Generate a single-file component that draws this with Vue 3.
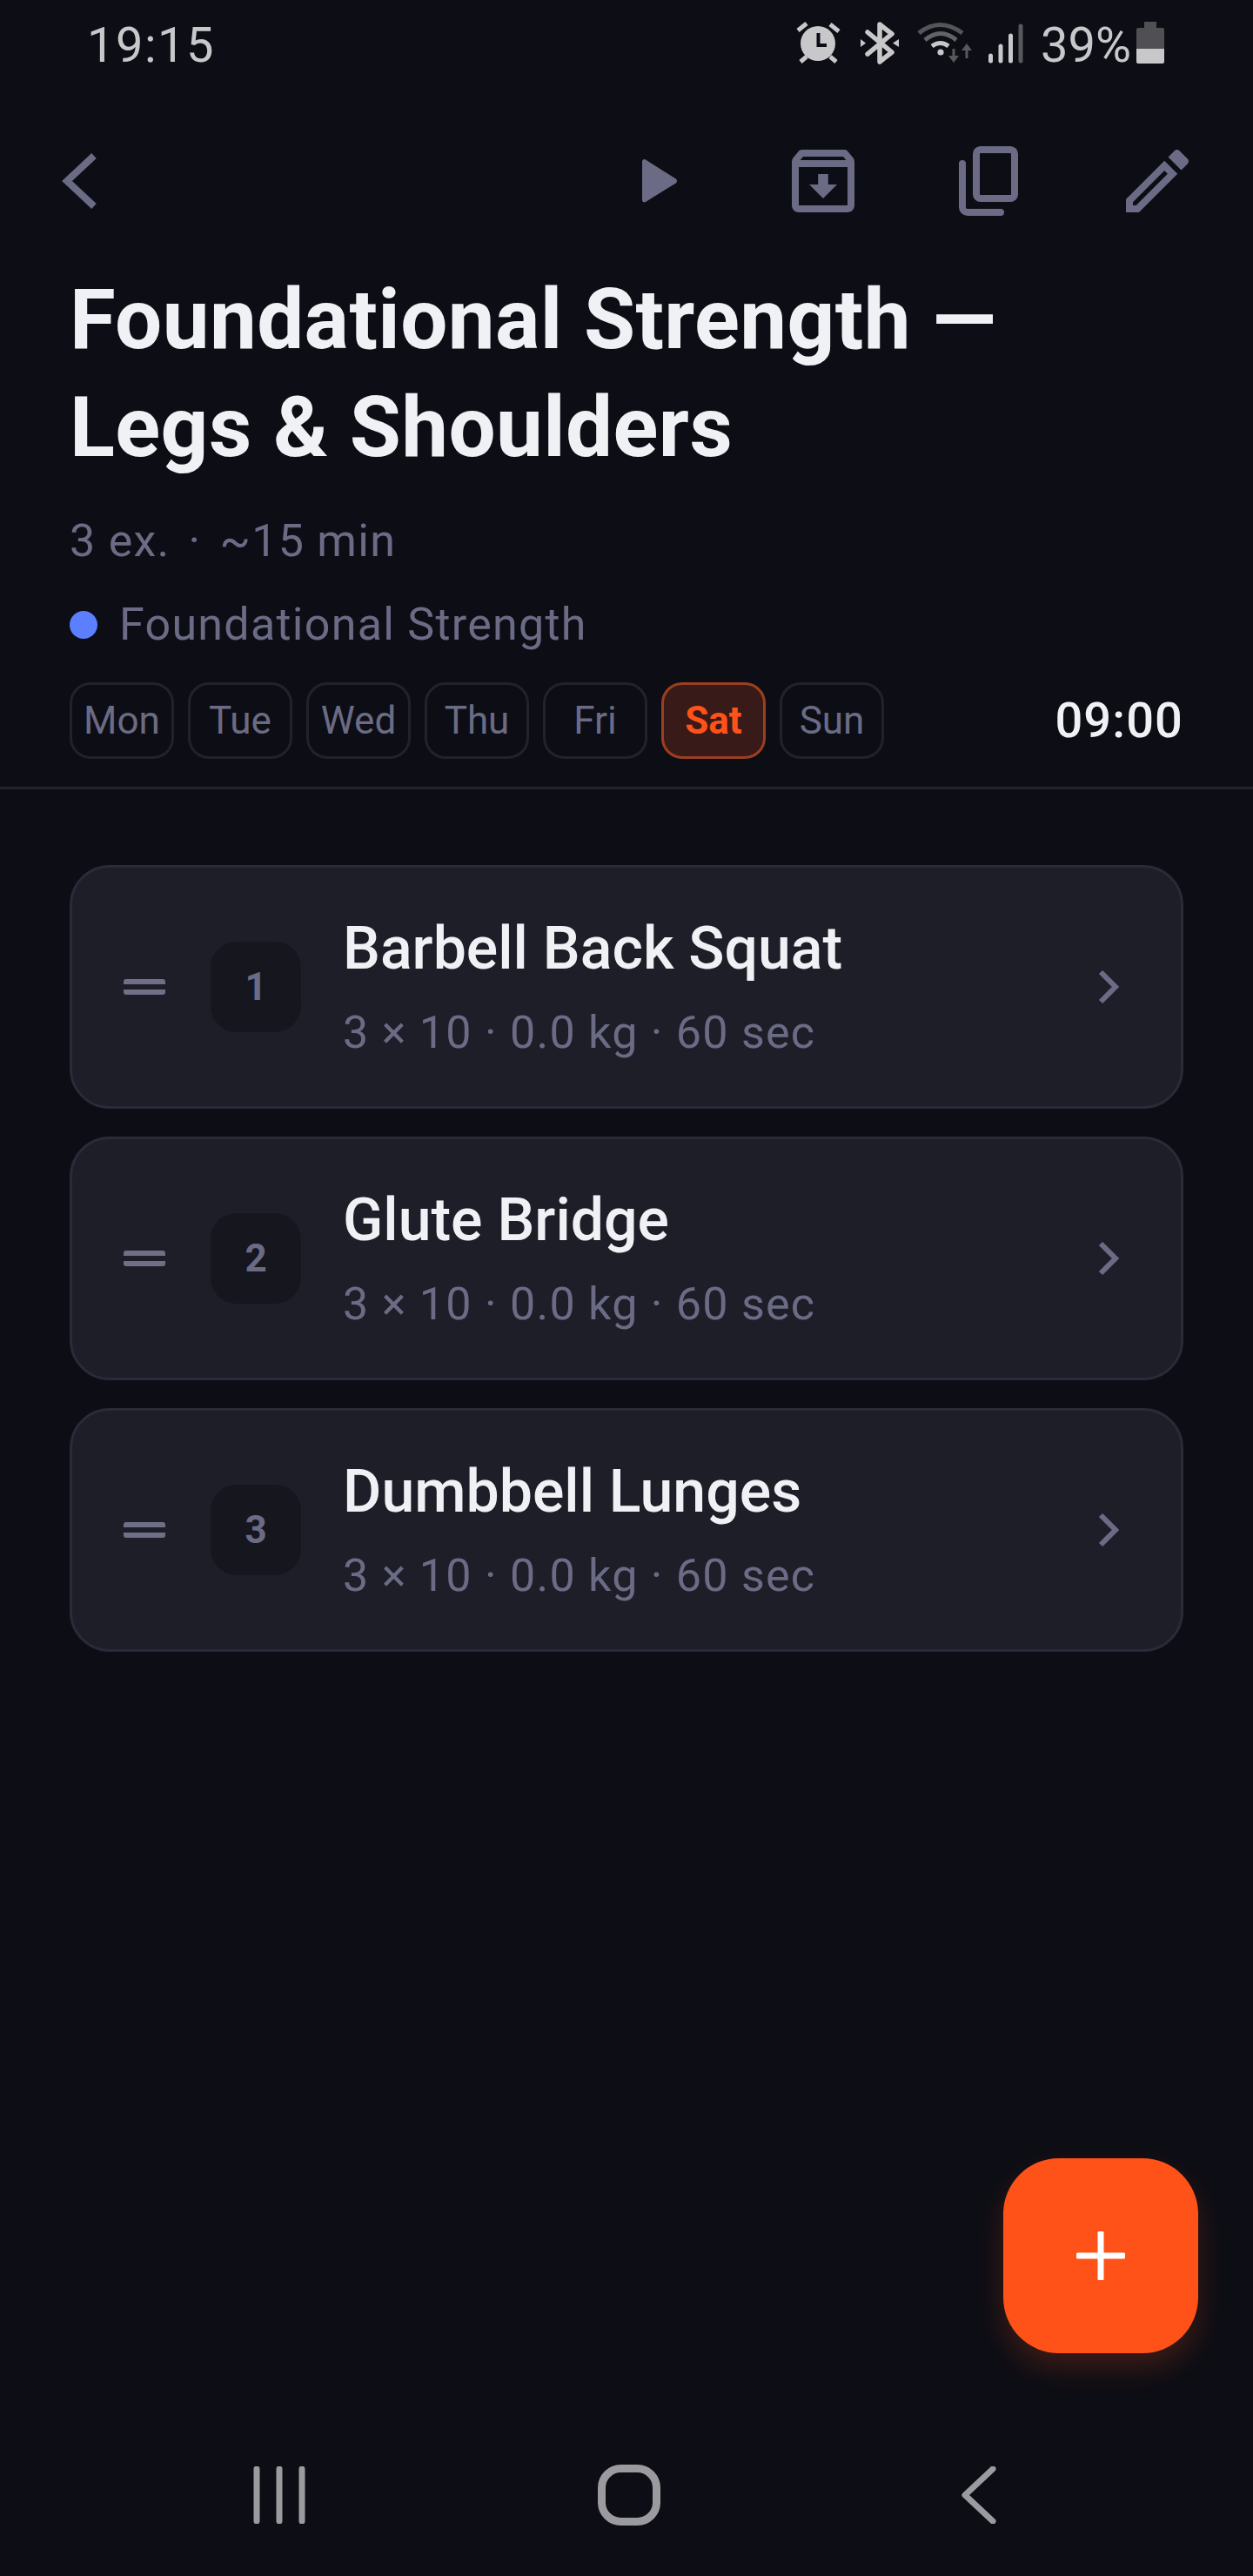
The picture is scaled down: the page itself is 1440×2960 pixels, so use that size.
<template>
  <div class="screen">
    <div class="status">
      <span class="clock">19:15</span>
      <div class="status-icons">
        <svg width="52" height="50" viewBox="912 24 52 50">
          <circle cx="938" cy="50" r="20" fill="#c8c8cb" />
          <path d="M938.5 38V52H948" fill="none" stroke="#0d0e15" stroke-width="4" />
          <path d="M915 35L925 27M952 28L962 36M918 71L925 65M952 65L959 71" fill="none" stroke="#c8c8cb" stroke-width="5" />
        </svg>
        <svg width="52" height="50" viewBox="982 24 52 50">
          <path d="M995 37L1023 60L1009 71V28L1023 39L995 62" fill="none" stroke="#c8c8cb" stroke-width="5.5" stroke-linejoin="round" stroke-linecap="round" />
          <path d="M987 45L993 49.5L987 54ZM1031 45L1024 49.5L1031 54Z" fill="#c8c8cb" />
        </svg>
        <svg width="64" height="50" viewBox="1052 24 64 50">
          <path d="M1054 38Q1078 19 1104 38" fill="none" stroke="#555559" stroke-width="5" />
          <path d="M1061 46Q1079 31 1097 46" fill="none" stroke="#636367" stroke-width="5" />
          <path d="M1069 53Q1079 46 1088 53" fill="none" stroke="#c8c8cb" stroke-width="5" />
          <circle cx="1079" cy="60" r="3.6" fill="#c8c8cb" />
          <path d="M1092.5 56H1095.5V64H1100L1094 72L1088 64H1092.5ZM1107.5 67H1110.5V58H1115L1109 50L1103 58H1107.5Z" fill="#58585c" />
        </svg>
        <svg width="42" height="50" viewBox="1134 24 42 50">
          <path d="M1136.5 64V70M1148 53V70M1159.5 41V70" stroke="#c8c8cb" stroke-width="5" stroke-linecap="round" />
          <path d="M1171 30V70" stroke="#58585c" stroke-width="5" stroke-linecap="round" />
        </svg>
        <div class="batt">
          <span class="pct">39%</span>
          <svg width="32" height="50" viewBox="1306 24 32 50">
            <path d="M1315 25H1329V32H1336Q1338 32 1338 34V56H1306V34Q1306 32 1308 32H1315Z" fill="#4f4f54" />
            <path d="M1306 56H1338V71Q1338 73 1336 73H1308Q1306 73 1306 71Z" fill="#c8c8cb" />
          </svg>
        </div>
      </div>
    </div>

    <div class="toolbar">
      <button class="back">
        <svg width="48" height="72" viewBox="68 172 48 72">
          <path d="M108 179L77 208L108 237" fill="none" stroke="#6b6b85" stroke-width="8" />
        </svg>
      </button>
      <div class="actions">
        <button class="act">
          <svg width="96" height="96" viewBox="0 0 24 24" fill="#6b6b85">
            <path d="M8 6.4C8 5.9 8.6 5.6 9 5.9L17.7 11.4C18.1 11.7 18.1 12.3 17.7 12.6L9 18C8.6 18.3 8 18 8 17.500Z" />
          </svg>
        </button>
        <button class="act">
          <svg width="96" height="96" viewBox="0 0 24 24" fill="#6b6b85">
            <path d="M20.54 5.23l-1.39-1.68C18.88 3.21 18.47 3 18 3H6c-.47 0-.88.21-1.16.55L3.46 5.23C3.17 5.57 3 6.02 3 6.5V19c0 1.1.9 2 2 2h14c1.1 0 2-.9 2-2V6.5c0-.48-.17-.93-.46-1.27zM6.24 5h11.52l.83 1H5.42l.82-1zM5 19V8h14v11H5zm8.45-9h-2.9v3H8l4 4 4-4h-2.55z" />
          </svg>
        </button>
        <button class="act">
          <svg width="96" height="96" viewBox="0 0 24 24" fill="none" stroke="#6b6b85" stroke-width="2">
            <rect x="8" y="3" width="11" height="14" rx="1.2" />
            <path d="M4 7V19.500A1.500 1.500 0 0 0 5.500 21H15" stroke-linecap="round" />
          </svg>
        </button>
        <button class="act">
          <svg width="96" height="96" viewBox="0 0 24 24" fill="#6b6b85">
            <path d="M14.06 9.02l.92.92L5.92 19H5v-.92l9.06-9.06M17.66 3c-.25 0-.51.1-.7.29l-1.83 1.83 3.75 3.75 1.83-1.83c.39-.39.39-1.02 0-1.41l-2.34-2.34c-.2-.2-.45-.29-.71-.29zm-3.6 3.19L3 17.25V21h3.75L17.81 9.94l-3.75-3.75z" />
          </svg>
        </button>
      </div>
    </div>

    <div class="head">
      <h1>Foundational Strength —<br />Legs &amp; Shoulders</h1>
      <div class="meta">
        <span>3 ex.</span>
        <span>·</span>
        <span>~15 min</span>
      </div>
      <div class="group">
        <span class="dot"></span>
        <span>Foundational Strength</span>
      </div>
      <div class="sched">
        <div class="days">
          <span v-for="d in days" :key="d" class="day" :class="{ on: d === 'Sat' }">{{ d }}</span>
        </div>
        <span class="time">09:00</span>
      </div>
    </div>

    <div class="list">
      <div v-for="(ex, i) in exercises" :key="ex" class="card">
        <span class="handle"></span>
        <span class="num">{{ i + 1 }}</span>
        <div class="info">
          <div class="name">{{ ex }}</div>
          <div class="sub">3 × 10 · 0.0 kg · 60 sec</div>
        </div>
        <svg class="go" width="24" height="40" viewBox="0 0 24 40">
          <path d="M3 3L20 20L3 37" fill="none" stroke="#6b6b85" stroke-width="6" />
        </svg>
      </div>
    </div>

    <button class="fab">
      <svg width="56" height="56" viewBox="0 0 56 56">
        <path d="M28 2V54M2 28H54" stroke="#fff" stroke-width="7" stroke-linecap="round" />
      </svg>
    </button>

    <div class="nav">
      <div class="nav-item">
        <svg width="60" height="66" viewBox="0 0 60 66">
          <path d="M4 3V63M30 3V63M56 3V63" stroke="#9b9b9f" stroke-width="7" stroke-linecap="round" />
        </svg>
      </div>
      <div class="nav-item">
        <svg width="72" height="70" viewBox="0 0 72 70">
          <rect x="4.500" y="4.500" width="63" height="61" rx="22" fill="none" stroke="#9b9b9f" stroke-width="9" />
        </svg>
      </div>
      <div class="nav-item">
        <svg width="40" height="66" viewBox="0 0 40 66">
          <path d="M36 3L4 33L36 63" fill="none" stroke="#9b9b9f" stroke-width="7" stroke-linecap="round" stroke-linejoin="round" />
        </svg>
      </div>
    </div>
  </div>
</template>

<script setup>
const days = ['Mon', 'Tue', 'Wed', 'Thu', 'Fri', 'Sat', 'Sun'];
const exercises = ['Barbell Back Squat', 'Glute Bridge', 'Dumbbell Lunges'];
</script>

<style>
body {
  background: #0d0e15;
}
</style>

<style scoped>
.screen {
  position: relative;
  width: 1440px;
  height: 2960px;
  display: flex;
  flex-direction: column;
  background: #0d0e15;
  font-family: Roboto, "Liberation Sans", sans-serif;
  color: #6b6b85;
  overflow: hidden;
}

button {
  background: none;
  border: none;
  padding: 0;
  display: flex;
  align-items: center;
  justify-content: center;
}

.status {
  height: 112px;
  box-sizing: border-box;
  padding: 24px 102px 0 100px;
  display: flex;
  justify-content: space-between;
  align-items: flex-start;
  color: #c8c8cb;
  font-size: 56px;
  font-weight: 400;
  line-height: 50px;
}

.clock,
.pct {
  padding-top: 3px;
}

.clock {
  letter-spacing: 1.5px;
}

.status-icons {
  display: flex;
  gap: 18px;
}

.batt {
  display: flex;
  gap: 6px;
}

.toolbar {
  height: 193px;
  padding-right: 14px;
  display: flex;
  justify-content: space-between;
  align-items: flex-start;
}

.back {
  height: 192px;
  margin-left: 68px;
}

.actions {
  display: flex;
}

.act {
  width: 192px;
  height: 192px;
}

.head {
  padding: 0 80px 32px;
  border-bottom: 3px solid #21222c;
}

h1 {
  margin: 0;
  font-size: 96px;
  line-height: 124px;
  font-weight: 700;
  letter-spacing: 0.42px;
  color: #f0f1f5;
}

.meta {
  margin-top: 35px;
  display: flex;
  gap: 21px;
  font-size: 52px;
  line-height: 68px;
  letter-spacing: 1.28px;
}

.group {
  margin-top: 28px;
  display: flex;
  align-items: center;
  gap: 25px;
  font-size: 52px;
  line-height: 68px;
  letter-spacing: 1.28px;
}

.dot {
  width: 32px;
  height: 32px;
  border-radius: 50%;
  background: #5b7fff;
}

.sched {
  margin-top: 32px;
  display: flex;
  justify-content: space-between;
  align-items: center;
}

.days {
  display: flex;
  gap: 16px;
}

.day {
  width: 120px;
  height: 88px;
  box-sizing: border-box;
  display: flex;
  align-items: center;
  justify-content: center;
  border: 3px solid #21222c;
  border-radius: 24px;
  font-size: 44px;
}

.day.on {
  background: #381a18;
  border-color: #9c3f20;
  color: #ff5219;
  font-weight: 700;
}

.time {
  font-size: 56px;
  font-weight: 500;
  letter-spacing: 1.1px;
  color: #f0f1f5;
}

.list {
  padding: 87px 80px 0;
  display: flex;
  flex-direction: column;
  gap: 32px;
}

.card {
  height: 280px;
  box-sizing: border-box;
  padding: 0 71px 0 59px;
  display: flex;
  align-items: center;
  background: #1e1e29;
  border: 3px solid #2a2a38;
  border-radius: 46px;
}

.handle {
  width: 48px;
  height: 18px;
  box-sizing: border-box;
  border-top: 6px solid #6f6f88;
  border-bottom: 6px solid #6f6f88;
  border-radius: 3px;
}

.num {
  margin-left: 52px;
  width: 104px;
  height: 104px;
  border-radius: 30px;
  background: #16161e;
  display: flex;
  align-items: center;
  justify-content: center;
  font-size: 44px;
  font-weight: 700;
}

.info {
  margin-left: 48px;
  flex: 1;
}

.name {
  font-size: 68px;
  line-height: 84px;
  font-weight: 500;
  color: #f0f1f5;
}

.sub {
  margin-top: 21px;
  font-size: 52px;
  line-height: 68px;
  letter-spacing: 1.26px;
}

.fab {
  position: absolute;
  right: 63px;
  top: 2480px;
  width: 224px;
  height: 224px;
  border-radius: 64px;
  background: #ff5219;
  box-shadow: 0 16px 32px rgba(255, 82, 25, 0.2);
}

.nav {
  position: absolute;
  left: 0;
  right: 0;
  bottom: 0;
  height: 186px;
  padding-left: 6px;
  display: flex;
  justify-content: center;
  align-items: center;
}

.nav-item {
  width: 402px;
  display: flex;
  justify-content: center;
}
</style>
